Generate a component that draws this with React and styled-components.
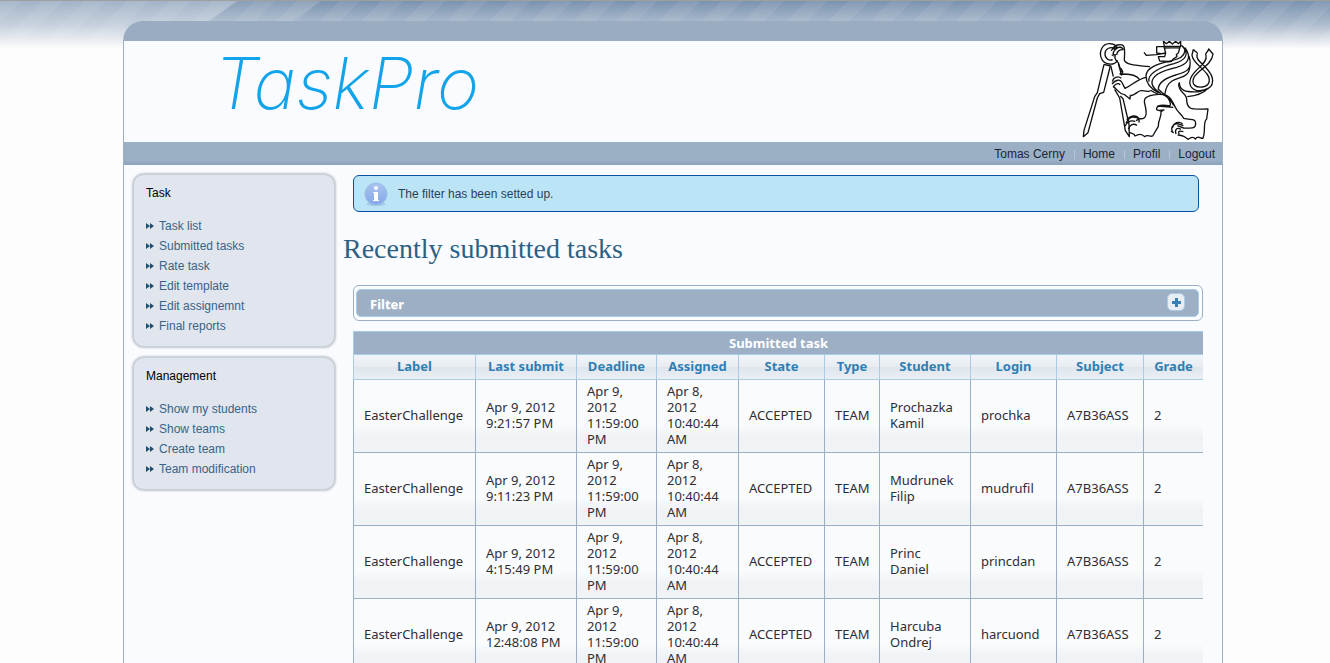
import React from "react";
import styled, { createGlobalStyle } from "styled-components";

const sans = `"Liberation Sans", Arial, sans-serif`;
const humanist = `"Noto Sans", "Open Sans", sans-serif`;
const steel = "#9aafc4";
const paleBlue = "#a8cce6";

const GlobalStyle = createGlobalStyle`
  * { box-sizing: border-box; }
  body { margin: 0; background: #fdfdfd; font-family: ${sans}; font-size: 12px; color: #222; }
  h1, h2, p, ul { margin: 0; padding: 0; }
`;

const Page = styled.div`
  border-top: 1px solid #a09f9f;
  padding: 20px 0 0 16px;
  background:
    linear-gradient(180deg, rgba(253, 253, 253, 0) 0, rgba(253, 253, 253, 0.4) 24px, #fdfdfd 48px),
    repeating-linear-gradient(135deg, rgba(255, 255, 255, 0.07) 0 15px, transparent 15px 30px),
    linear-gradient(146deg, rgba(255, 255, 255, 0.3) 133px, rgba(255, 255, 255, 0.1) 133px 180px, transparent 180px),
    linear-gradient(#7b93b0, #7b93b0);
  background-size: 100% 48px;
  background-repeat: no-repeat;
`;

const Shell = styled.div`
  max-width: 1100px;
  margin: 0 auto;
  background: #f9fbfe;
  border: 1px solid ${steel};
  border-top: 20px solid #99acc2;
  border-bottom: 0;
  border-radius: 20px 20px 0 0;
`;

const Header = styled.header`
  display: flex;
  justify-content: space-between;
  height: 101px;
`;

const Brand = styled.a`
  padding-left: 90px;
  font: italic 200 72px/84px Inter, sans-serif;
  color: #12a4ea;
  text-decoration: none;
`;

const Emblem = styled.svg`
  display: block;
  width: 142px;
  height: 101px;
  background: #fff;
  fill: none;
  stroke: #111;
  stroke-width: 4;
  stroke-linejoin: round;
`;

const NavBar = styled.nav`
  display: flex;
  justify-content: flex-end;
  align-items: center;
  height: 23px;
  padding-right: 7px;
  background: linear-gradient(#9bb0c5 80%, #8ba1bb);
`;

const NavLink = styled.a`
  color: #1b2536;
  line-height: 14px;
  text-decoration: none;
  & + & {
    margin-left: 9px;
    padding-left: 9px;
    background: linear-gradient(#b9c7d5, #b9c7d5) 0 3px / 1px 9px no-repeat;
  }
`;

const Body = styled.div`
  display: flex;
  gap: 8px;
  padding: 9px 19px 0 9px;
`;

const Sidebar = styled.aside`
  flex: 0 0 202px;
  display: flex;
  flex-direction: column;
  gap: 10px;
`;

const Card = styled.section`
  padding: 8px 12px 10px;
  border: 1px solid #c7d0da;
  border-radius: 11px;
  background: #e1e6ee;
  box-shadow: 0 0 2px 1px #c3c6ca;
  line-height: 20px;
`;

const CardTitle = styled.h2`
  margin-bottom: 13px;
  font-size: 12px;
  font-weight: 400;
  color: #000;
`;

const Menu = styled.ul`
  list-style: none;
`;

const MenuItem = styled.li`
  display: flex;
  align-items: center;
  gap: 5px;
`;

const MenuLink = styled.a`
  color: #386488;
  text-decoration: none;
`;

const Arrows = styled.svg`
  width: 8px;
  height: 6px;
  fill: #1f4f70;
`;

const Main = styled.main`
  flex: 1;
  min-width: 0;
`;

const Content = styled.div`
  padding-left: 10px;
`;

const Message = styled.div`
  display: flex;
  align-items: center;
  gap: 10px;
  height: 37px;
  margin: 1px 4px 0 10px;
  padding: 0 10px;
  border: 1px solid #0c519b;
  border-radius: 6px;
  background: #bbe5f7;
  color: #2e3f55;
`;

const InfoIcon = styled.svg`
  width: 24px;
  height: 24px;
`;

const Title = styled.h1`
  padding: 20px 0;
  font: 400 28px/33px "Liberation Serif", "Times New Roman", serif;
  color: #2c6184;
`;

const FilterPanel = styled.section`
  padding: 3px 3px 3px 2px;
  border: 1px solid ${steel};
  border-radius: 6px;
  background: #fbfcfe;
`;

const FilterBar = styled.div`
  display: flex;
  align-items: center;
  justify-content: space-between;
  height: 28px;
  padding: 0 13px 2px;
  border: 1px solid ${paleBlue};
  border-radius: 5px;
  background: #9cafc4;
`;

const FilterTitle = styled.h2`
  padding-top: 4px;
  font: 700 13px/16px ${humanist};
  color: #fff;
  text-shadow: 0 1px 1px #b9c8d8;
`;

const ExpandButton = styled.button`
  display: flex;
  align-items: center;
  justify-content: center;
  width: 18px;
  height: 18px;
  padding: 0;
  border: 1px solid ${paleBlue};
  border-radius: 5px;
  background: #e8edf3;
  svg { width: 9px; height: 9px; fill: #3680b3; }
`;

const Table = styled.table`
  width: 100%;
  margin-top: 10px;
  table-layout: fixed;
  border-collapse: separate;
  border-spacing: 0;
  border-left: 1px solid ${paleBlue};
  font: 13px/16px ${humanist};
`;

const Caption = styled.caption`
  padding: 3px 0;
  border: 1px solid ${paleBlue};
  border-right: 0;
  background: #9cafc4;
  font-weight: 700;
  color: #fff;
`;

const HeadCell = styled.th`
  height: 25px;
  padding: 0 0 2px;
  border-bottom: 1px solid ${paleBlue};
  border-right: 1px solid ${paleBlue};
  background: linear-gradient(#f1f4f8 0, #e8ecf1 12px, #dfe5ed 12px, #eaeff4 100%);
  color: #2f7fb3;
  white-space: nowrap;
  &:last-child { border-right: 0; }
`;

const Cell = styled.td`
  height: 73px;
  padding: 3px 5px 5px 10px;
  border-bottom: 1px solid ${steel};
  border-right: 1px solid ${steel};
  background: linear-gradient(#f9fbfd 62%, #eff3f6 80%, #f1f4f7);
  color: #302d35;
  vertical-align: middle;
  &:first-child { box-shadow: -1px 0 ${steel}; }
  &:last-child { border-right: 0; }
`;

const Line = styled.span`
  display: block;
  white-space: nowrap;
`;

const menus = [
  {
    title: "Task",
    items: ["Task list", "Submitted tasks", "Rate task", "Edit template", "Edit assignemnt", "Final reports"],
  },
  { title: "Management", items: ["Show my students", "Show teams", "Create team", "Team modification"] },
];

const columns = [
  ["Label", 122],
  ["Last submit", 101],
  ["Deadline", 80],
  ["Assigned", 82],
  ["State", 86],
  ["Type", 55],
  ["Student", 91],
  ["Login", 86],
  ["Subject", 87],
  ["Grade", 59],
];

const rows = [
  ["9:21:57 PM", "Prochazka", "Kamil", "prochka"],
  ["9:11:23 PM", "Mudrunek", "Filip", "mudrufil"],
  ["4:15:49 PM", "Princ", "Daniel", "princdan"],
  ["12:48:08 PM", "Harcuba", "Ondrej", "harcuond"],
];

function LionEmblem() {
  return (
    <Emblem viewBox="30 33 426 303" role="img" aria-label="Lion with compasses">
      {/* compasses */}
      <path d="M141 50C128 37 105 38 96 54C86 71 93 96 112 101C126 105 137 100 143 91M135 56C122 49 106 55 105 70C104 85 117 94 128 89" />
      <path d="M102 103L82 188L74 200L42 301L40 320L54 308L82 204L89 191L101 187L121 108M102 103L121 108" />
      <path d="M122 106L130 140M145 101L155 137M134 178L149 204L166 302L178 320L177 282L159 206L151 198" />
      {/* upper paw and arm */}
      <path d="M126 58C134 45 150 40 160 47C167 55 163 76 163 90C166 101 180 105 240 110M123 62C131 53 140 51 143 54C130 61 127 68 131 79M132 58C146 48 158 51 159 59C150 59 141 64 140 75M125 76L136 74C132 85 136 91 145 98L151 116L157 122C162 130 154 135 150 132C186 132 201 136 210 150M147 115C155 113 159 122 151 129" />
      {/* lower paw and arm */}
      <path d="M127 155C129 143 143 136 154 145M126 162C136 149 150 147 155 156M130 170C139 158 148 159 150 165M129 169C143 179 149 193 164 194L180 207L181 196C193 200 202 181 214 182C229 181 235 189 242 181M155 156L165 175C185 167 202 147 228 142" />
      {/* crown and head */}
      <path d="M280 33L283 49L332 49V34L325 41L317 34L307 42L298 34L289 41L280 33M282 50L260 50V69L272 71M222 67L229 76L260 74L287 69L284 80L265 80L269 93L294 94M331 51C323 61 333 66 319 74C326 85 310 79 305 94L292 96M281 54L330 53M282 50L287 69" />
      {/* mane */}
      <path d="M334 46C351 57 345 72 333 82C316 96 230 97 228 137C228 158 239 174 265 188M345 53C369 87 349 104 320 112C283 120 244 135 246 160C247 174 261 183 273 191M337 49C361 73 345 91 312 101C267 112 231 133 237 155M357 79C371 121 344 127 317 135C287 144 265 158 265 178L282 193M360 104C359 147 328 139 306 153C290 163 286 180 284 195" />
      {/* tail */}
      <path d="M370 58C380 71 385 63 381 76C375 94 419 111 427 144C434 177 401 184 379 181C355 173 354 151 371 130C388 110 413 94 408 78C403 67 413 70 416 57L429 72C426 105 378 124 371 144C363 165 379 173 397 171C421 168 422 147 411 132C397 113 366 95 366 75L370 58M328 157C328 181 344 188 389 185L414 175C398 193 376 197 352 200" />
      {/* body and legs */}
      <path d="M326 160C324 190 353 188 350 212C353 243 369 237 414 237L410 267C398 276 408 301 399 325C388 325 385 315 376 327C368 317 362 324 354 328C345 320 340 316 323 315M242 181C250 187 258 190 266 193C221 196 220 208 225 225C232 252 229 269 209 266L198 272M266 193C298 191 305 210 316 232C322 247 334 250 341 265C363 271 376 264 377 280C377 299 363 294 341 294L322 287" />
      <path d="M280 193C301 204 303 223 300 228C278 224 262 224 260 235C258 243 269 242 282 240L273 245C275 262 263 273 265 289L248 318C240 322 233 312 224 320C216 311 205 312 195 318C192 306 185 313 178 307M262 228L310 232M297 203L311 226" />
      {/* claws */}
      <path d="M165 289C171 276 182 270 196 274M168 280C174 266 185 260 195 262C205 262 209 268 207 278M170 269C181 257 198 252 207 266M175 298C180 284 190 279 201 286M309 308C300 292 309 282 322 281L340 287M307 294C310 278 328 272 338 282M318 312C313 296 322 292 333 298M328 313C322 304 329 301 340 305M303 303L311 309" />
    </Emblem>
  );
}

function SideMenu({ title, items }) {
  return (
    <Card>
      <CardTitle>{title}</CardTitle>
      <Menu>
        {items.map((item) => (
          <MenuItem key={item}>
            <Arrows viewBox="0 0 8 6" aria-hidden="true">
              <path d="M0 0L4 3L0 6ZM4 0L8 3L4 6Z" />
            </Arrows>
            <MenuLink href="#">{item}</MenuLink>
          </MenuItem>
        ))}
      </Menu>
    </Card>
  );
}

function LinesCell({ lines }) {
  return (
    <Cell>
      {lines.map((line) => (
        <Line key={line}>{line}</Line>
      ))}
    </Cell>
  );
}

export default function App() {
  return (
    <>
      <GlobalStyle />
      <Page>
        <Shell>
          <Header>
            <Brand href="#">TaskPro</Brand>
            <LionEmblem />
          </Header>
          <NavBar>
            {["Tomas Cerny", "Home", "Profil", "Logout"].map((label) => (
              <NavLink href="#" key={label}>{label}</NavLink>
            ))}
          </NavBar>
          <Body>
            <Sidebar>
              {menus.map((menu) => (
                <SideMenu key={menu.title} {...menu} />
              ))}
            </Sidebar>
            <Main>
              <Message role="status">
                <InfoIcon viewBox="0 0 24 24" aria-hidden="true">
                  <defs>
                    <linearGradient id="info" x1="0" y1="0" x2="0" y2="1">
                      <stop offset="0" stopColor="#a9c4ee" />
                      <stop offset="1" stopColor="#83a8e9" />
                    </linearGradient>
                  </defs>
                  <ellipse cx="12" cy="22" rx="10" ry="2" fill="#a3cde6" />
                  <circle cx="12" cy="12" r="11" fill="url(#info)" stroke="#9dbbe8" />
                  <circle cx="12" cy="6" r="2" fill="#fff" />
                  <path d="M9 10H14V18H15V19H9V18H10V11H9Z" fill="#fff" />
                </InfoIcon>
                <p>The filter has been setted up.</p>
              </Message>
              <Title>Recently submitted tasks</Title>
              <Content>
                <FilterPanel>
                  <FilterBar>
                    <FilterTitle>Filter</FilterTitle>
                    <ExpandButton type="button" aria-label="Expand filter">
                      <svg viewBox="0 0 9 9" aria-hidden="true">
                        <path d="M3 0H6V3H9V6H6V9H3V6H0V3H3Z" />
                      </svg>
                    </ExpandButton>
                  </FilterBar>
                </FilterPanel>
                <Table>
                  <Caption>Submitted task</Caption>
                  <colgroup>
                    {columns.map(([name, width]) => (
                      <col key={name} width={width} />
                    ))}
                  </colgroup>
                  <thead>
                    <tr>
                      {columns.map(([name]) => (
                        <HeadCell key={name} scope="col">{name}</HeadCell>
                      ))}
                    </tr>
                  </thead>
                  <tbody>
                    {rows.map(([time, surname, name, login]) => (
                      <tr key={login}>
                        <Cell>EasterChallenge</Cell>
                        <LinesCell lines={["Apr 9, 2012", time]} />
                        <LinesCell lines={["Apr 9,", "2012", "11:59:00", "PM"]} />
                        <LinesCell lines={["Apr 8,", "2012", "10:40:44", "AM"]} />
                        <Cell>ACCEPTED</Cell>
                        <Cell>TEAM</Cell>
                        <LinesCell lines={[surname, name]} />
                        <Cell>{login}</Cell>
                        <Cell>A7B36ASS</Cell>
                        <Cell>2</Cell>
                      </tr>
                    ))}
                  </tbody>
                </Table>
              </Content>
            </Main>
          </Body>
        </Shell>
      </Page>
    </>
  );
}
